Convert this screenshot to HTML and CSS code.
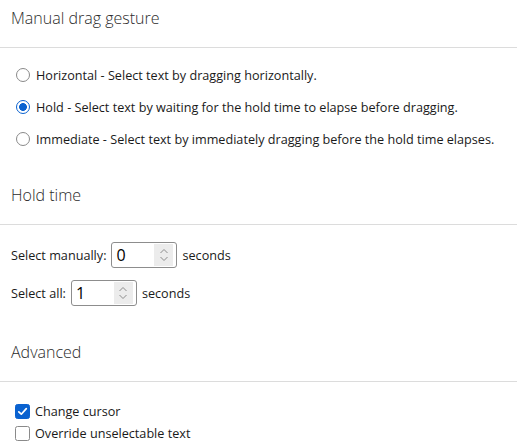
FILE: index.html
```html
<!DOCTYPE html>
<html>
<head>
<meta charset="utf-8">
<link rel="stylesheet" href="styles.css">
</head>
<body>
<section class="section sec-gesture">
  <h2 class="heading">Manual drag gesture</h2>
  <div class="options">
    <div class="opt"><span class="radio"></span><span>Horizontal - Select text by dragging horizontally.</span></div>
    <div class="opt"><span class="radio checked"></span><span>Hold - Select text by waiting for the hold time to elapse before dragging.</span></div>
    <div class="opt"><span class="radio"></span><span>Immediate - Select text by immediately dragging before the hold time elapses.</span></div>
  </div>
</section>
<section class="section sec-hold">
  <h2 class="heading">Hold time</h2>
  <div class="fields">
    <div class="field"><span>Select manually:</span>
      <span class="num"><span class="num-val">0</span><span class="spin"><svg width="10" height="18" viewBox="0 0 10 18"><path d="M1.5 7 L5 3.5 L8.5 7" fill="none" stroke="#8c8c8c" stroke-width="1"/><path d="M1.5 11 L5 14.5 L8.5 11" fill="none" stroke="#8c8c8c" stroke-width="1"/></svg></span></span>
      <span>seconds</span></div>
    <div class="field"><span>Select all:</span>
      <span class="num"><span class="num-val">1</span><span class="spin"><svg width="10" height="18" viewBox="0 0 10 18"><path d="M1.5 7 L5 3.5 L8.5 7" fill="none" stroke="#8c8c8c" stroke-width="1"/><path d="M1.5 11 L5 14.5 L8.5 11" fill="none" stroke="#8c8c8c" stroke-width="1"/></svg></span></span>
      <span>seconds</span></div>
  </div>
</section>
<section class="section sec-adv">
  <h2 class="heading">Advanced</h2>
  <div class="checks">
    <div class="chk"><span class="box checked"><svg width="11" height="11" viewBox="0 0 11 11"><path d="M1.8 5.8 L4.3 8.2 L9.3 2.6" fill="none" stroke="#fff" stroke-width="1.7" stroke-linecap="round" stroke-linejoin="round"/></svg></span><span>Change cursor</span></div>
    <div class="chk"><span class="box"></span><span>Override unselectable text</span></div>
  </div>
</section>
</body>
</html>
```
FILE: styles.css
```css
html, body {
  margin: 0;
  padding: 0;
  background: #fff;
}
body {
  font-family: "Open Sans", "Noto Sans", sans-serif;
  font-size: 12.65px;
  color: #1a1a1a;
  width: 517px;
  height: 448px;
  overflow: hidden;
}
.section {
  display: flex;
  flex-direction: column;
}
.heading {
  margin: 0;
  padding: 6px 11px 17px;
  font-size: 16px;
  line-height: 24px;
  font-weight: 300;
  color: #2b2b2b;
  border-bottom: 1px solid #dcdcdc;
}
.options {
  display: flex;
  flex-direction: column;
  padding-top: 11px;
  margin-bottom: 22px;
}
.opt {
  height: 32px;
  display: flex;
  align-items: center;
  gap: 6px;
  padding-left: 16px;
}
.radio {
  width: 14px;
  height: 14px;
  box-sizing: border-box;
  border: 1.5px solid #8a8a8a;
  border-radius: 50%;
  flex: none;
}
.radio.checked {
  border-color: #0a62d0;
  background: radial-gradient(circle, #0a62d0 0 3.6px, #fff 4.2px);
}
.fields {
  display: flex;
  flex-direction: column;
  gap: 6px;
  padding: 14px 0 3px 11px;
  margin-bottom: 22px;
}
.field {
  height: 32px;
  display: flex;
  align-items: center;
  gap: 5px;
}
.num {
  width: 66px;
  height: 26px;
  box-sizing: border-box;
  border: 1px solid #8d8d8d;
  border-radius: 3px;
  display: flex;
  align-items: center;
  justify-content: space-between;
  padding: 1px 3px 1px 4px;
}
.num-val {
  font-size: 16px;
  color: #000;
}
.spin {
  width: 19px;
  height: 22px;
  background: #ececec;
  display: flex;
  align-items: center;
  justify-content: center;
}
.checks {
  display: flex;
  flex-direction: column;
  padding-top: 18px;
}
.chk {
  height: 22px;
  display: flex;
  align-items: center;
  gap: 5px;
  padding-left: 15px;
}
.box {
  width: 15px;
  height: 15px;
  box-sizing: border-box;
  border: 1.5px solid #8a8a8a;
  border-radius: 2.5px;
  flex: none;
  display: flex;
  align-items: center;
  justify-content: center;
}
.box.checked {
  border-color: #0a62d0;
  background: #0a62d0;
}
```
